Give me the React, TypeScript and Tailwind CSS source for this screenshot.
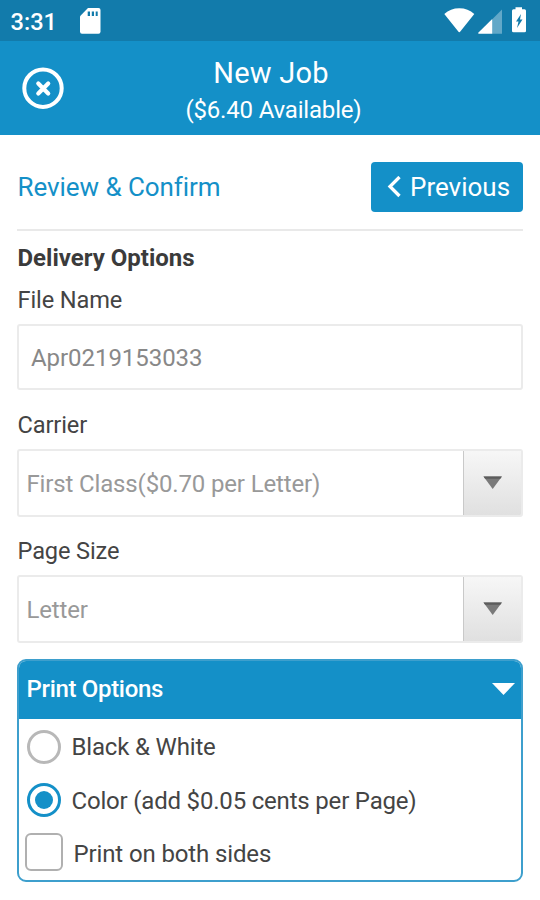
import React from "react";

function StatusBar() {
  return (
    <div className="flex h-[41px] items-start bg-[#127bab] text-white">
      <span className="ml-[10.5px] mt-[6px] w-[69.5px] text-[23.6px] font-medium leading-[32px]">3:31</span>
      <svg className="mt-[8px]" width="21" height="26" viewBox="0 0 21 26">
        <path fill="#fff" d="M8 0H18.5Q20.5 0 20.5 2V23.5Q20.5 25.8 18.500 25.8H2Q0 25.800 0 23.500V8.200Z" />
        <path fill="#127bab" d="M7.700 3.500H10V8H7.700zM11.800 3.500H14V8H11.800zM15.700 3.500H17.700V8H15.700z" />
      </svg>
      <svg className="ml-auto mr-[13px] mt-[6px]" width="84" height="30" viewBox="0 0 84 30">
        <path fill="#fff" d="M1.300 8Q7.500 2.200 16.300 2.200T31.300 8L17.500 25.300Q16.300 27 15.100 25.300Z" />
        <path fill="#62a8c8" d="M59 3.500V27.800H49V13.500Z" />
        <path fill="#fff" d="M49.200 13V27.800H36Q34.500 27.800 35.500 26.500Z" />
        <path fill="#fff" d="M72.500 1.200H79V3.200H81.500Q83 3.200 83 4.700V25Q83 26.300 81.500 26.300H70.500Q69 26.300 69 25V4.700Q69 3.200 70.500 3.200H72.500Z" />
        <path fill="#127bab" d="M78 8L73 15.500H75.500L74 22L79.500 13.500H77Z" />
      </svg>
    </div>
  );
}

function Header() {
  return (
    <header className="flex h-[94px] bg-[#1490c8] text-white">
      <svg className="ml-[22px] mt-[26px] shrink-0" width="42" height="42" viewBox="0 0 42 42" fill="none" stroke="#fff">
        <circle cx="21" cy="21.200" r="18.700" strokeWidth="4" />
        <path d="M16.300 16.500L26.200 26.400M26.200 16.500L16.300 26.400" strokeWidth="4.200" strokeLinecap="round" />
      </svg>
      <div className="mr-[62px] flex flex-1 flex-col items-center pt-[14px]">
        <h1 className="text-[29px] leading-[36px] tracking-[0.2px]">New Job</h1>
        <p className="ml-[5px] mt-[0.5px] text-[24px] leading-[36px] tracking-[-0.18px]">($6.40 Available)</p>
      </div>
    </header>
  );
}

function Select({ value }: { value: string }) {
  return (
    <div className="flex h-[68px] overflow-hidden rounded-[3px] border-2 border-[#ebebeb]">
      <div className="flex flex-1 items-center pl-[7.500px] pt-[2px] text-[24px] tracking-[-0.15px] text-[#999]">{value}</div>
      <div className="-my-[2px] -mr-[2px] flex w-[60px] justify-center rounded-r-[3px] border border-b-2 border-t-[#e2e2e2] border-l-[#c9c9c9] border-r-[#d5d5d5] border-b-[#cacaca] bg-linear-to-b from-[#f7f7f7] to-[#e0e0e0] pt-[26px]">
        <svg className="-ml-[1px]" width="20" height="14" viewBox="0 0 20 14">
          <path fill="#7a7a7a" d="M.5.500H18.900L9.700 13Z" />
          <path fill="#5c5c5c" d="M.5.500H18.900L17.300 2.700H2.100Z" />
        </svg>
      </div>
    </div>
  );
}

function Label({ children }: { children: React.ReactNode }) {
  return <div className="pl-[0.5px] text-[23.600px] leading-[32px] tracking-[-0.12px] text-[#444]">{children}</div>;
}

function PrintOptions() {
  return (
    <section className="mt-[16px] h-[223px] overflow-hidden rounded-[9px] border-2 border-[#3d9fcd]">
      <div className="-mx-[2px] -mt-[2px] flex h-[60px] items-center justify-between bg-[#1490c8] pl-[9.500px] pr-[8.500px] text-white">
        <span className="text-[24px] font-medium leading-[32px] tracking-[-0.32px]">Print Options</span>
        <svg width="23" height="12" viewBox="0 0 23 12"><path fill="#fff" d="M0 0H23L11.500 12Z" /></svg>
      </div>
      <div className="flex h-[54px] items-center pl-[8px] pt-[1px] text-[24px] tracking-[-0.17px] text-[#444]">
        <span className="size-[34px] rounded-full border-[3px] border-[#b8b8b8]" />
        <span className="ml-[10.5px] pt-[1px]">Black &amp; White</span>
      </div>
      <div className="flex h-[54px] items-center pl-[8px] text-[24px] tracking-[-0.19px] text-[#444]">
        <span className="flex size-[34px] items-center justify-center rounded-full border-[3px] border-[#1490c8]">
          <span className="size-[18px] rounded-full bg-[#1490c8]" />
        </span>
        <span className="ml-[10.5px] pt-[1px]">Color (add $0.05 cents per Page)</span>
      </div>
      <div className="flex h-[50px] items-center pl-[6px] text-[24px] tracking-[-0.13px] text-[#444]">
        <span className="size-[38px] rounded-[6px] border-2 border-[#b0b0b0]" />
        <span className="ml-[10.5px] pt-[4px]">Print on both sides</span>
      </div>
    </section>
  );
}

export default function App() {
  return (
    <div className="h-[900px] w-[540px] overflow-hidden bg-white font-['Roboto',sans-serif]">
      <StatusBar />
      <Header />
      <main className="px-[17px] pt-[27px]">
        <div className="flex h-[50px] items-center justify-between">
          <h2 className="pl-[0.500px] text-[26px] leading-[32px] tracking-[-0.06px] text-[#1490c8]">Review &amp; Confirm</h2>
          <button className="flex h-[50px] w-[152px] items-center rounded-[4px] bg-[#1490c8] pl-[15.500px] text-[26px] leading-[32px] text-white">
            <svg width="14" height="22" viewBox="0 0 14 22" fill="none" stroke="#fff" strokeWidth="3.300"><path d="M12.500 1L3 10.500L12.500 20" /></svg>
            <span className="ml-[9.500px]">Previous</span>
          </button>
        </div>
        <div className="mt-[17px] h-[2px] bg-[#e9e9e9]" />
        <h3 className="mt-[11px] pl-[0.500px] text-[24px] font-bold leading-[32px] text-[#3b3b3b]">Delivery Options</h3>
        <div className="mt-[10px]"><Label>File Name</Label></div>
        <div className="mt-[8px] flex h-[66px] items-center rounded-[3px] border-2 border-[#ebebeb] pl-[12px] pt-[1px] text-[24px] tracking-[-0.05px] text-[#888]">Apr0219153033</div>
        <div className="mt-[19px]"><Label>Carrier</Label></div>
        <div className="mt-[8px]"><Select value="First Class($0.70 per Letter)" /></div>
        <div className="mt-[18px]"><Label>Page Size</Label></div>
        <div className="mt-[8px]"><Select value="Letter" /></div>
        <PrintOptions />
      </main>
    </div>
  );
}
